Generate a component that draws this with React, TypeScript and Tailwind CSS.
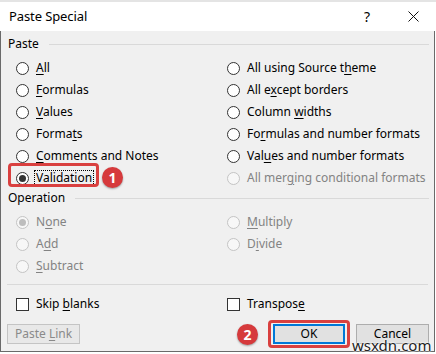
import React from "react";

type Lbl = { pre: string; u: string; post: string };

function Radio({ checked, disabled }: { checked?: boolean; disabled?: boolean }) {
  return (
    <span
      className={
        disabled
          ? "w-[13px] h-[13px] rounded-full border border-[#c4c4c4] bg-[#f7f7f7] flex items-center justify-center shrink-0"
          : "w-[13px] h-[13px] rounded-full border border-[#333333] bg-white flex items-center justify-center shrink-0"
      }
    >
      {checked ? (
        <span
          className={
            disabled
              ? "w-[7px] h-[7px] rounded-full bg-[#bdbdbd]"
              : "w-[7px] h-[7px] rounded-full bg-[#333333]"
          }
        />
      ) : null}
    </span>
  );
}

function Text({ l, disabled }: { l: Lbl; disabled?: boolean }) {
  return (
    <span className={disabled ? "text-[#838383] whitespace-nowrap" : "text-black whitespace-nowrap"}>
      {l.pre}
      <span className="underline underline-offset-[2px] decoration-1">{l.u}</span>
      {l.post}
    </span>
  );
}

function Opt({ l, checked, disabled }: { l: Lbl; checked?: boolean; disabled?: boolean }) {
  return (
    <div className="flex items-center h-[22px] gap-[7px]">
      <Radio checked={checked} disabled={disabled} />
      <Text l={l} disabled={disabled} />
    </div>
  );
}

function Check({ l }: { l: Lbl }) {
  return (
    <div className="flex items-center h-[22px] gap-[7px]">
      <span className="w-[13px] h-[13px] border border-[#333333] bg-white shrink-0" />
      <Text l={l} />
    </div>
  );
}

function Badge({ n }: { n: string }) {
  return (
    <span className="w-[21px] h-[21px] rounded-full bg-[#d63a3c] text-white text-[14px] font-bold flex items-center justify-center shadow-[0_1px_2px_rgba(0,0,0,0.35)] leading-none">
      {n}
    </span>
  );
}

function Header({ title }: { title: string }) {
  return (
    <div className="flex items-center h-[16px] pl-[7px] pr-[5px] gap-[10px]">
      <span className="text-black">{title}</span>
      <span className="flex-1 h-px bg-[#d9d9d9]" />
    </div>
  );
}

const L = (pre: string, u: string, post: string): Lbl => ({ pre, u, post });

export default function App() {
  return (
    <div className="w-[436px] h-[354px] bg-white relative overflow-hidden font-['Segoe_UI','Noto_Sans',sans-serif] text-[12px]">
      <div className="h-[2px] bg-[#e4e4e4]" />
      <div className="h-[29px] flex items-center bg-white">
        <span className="pl-[9px] text-[13px] tracking-[-0.1px] text-black">Paste Special</span>
        <div className="ml-auto flex items-center">
          <span className="w-[46px] flex justify-center text-[14px] text-black">?</span>
          <span className="w-[46px] flex justify-center">
            <svg width="11" height="11" viewBox="0 0 11 11">
              <path d="M0.5 0.5 L10.5 10.5 M10.5 0.5 L0.5 10.5" stroke="#111" strokeWidth="1" />
            </svg>
          </span>
        </div>
      </div>
      <div className="w-[435px] h-[321px] border-l border-r border-b border-[#6a6a6a] bg-[#f0f0f0] flex flex-col pt-[5px]">
        <Header title="Paste" />
        <div className="mt-[5px] grid grid-cols-[211px_1fr] pl-[15px]">
          <Opt l={L("", "A", "ll")} />
          <Opt l={L("All using Source t", "h", "eme")} />
          <Opt l={L("", "F", "ormulas")} />
          <Opt l={L("All e", "x", "cept borders")} />
          <Opt l={L("", "V", "alues")} />
          <Opt l={L("Column ", "w", "idths")} />
          <Opt l={L("Forma", "t", "s")} />
          <Opt l={L("Fo", "r", "mulas and number formats")} />
          <Opt l={L("", "C", "omments and Notes")} />
          <Opt l={L("Val", "u", "es and number formats")} />
          <div className="relative flex items-center h-[22px] gap-[7px]">
            <span className="absolute left-[-8px] top-[-4px] w-[91px] h-[24px] border-[3px] border-[#d9403f] rounded-[4px]" />
            <Radio checked />
            <span className="-ml-[2px] px-[1px] h-[16px] flex items-center border border-dotted border-black text-black whitespace-nowrap">
              Validatio<span className="underline underline-offset-[2px] decoration-1">n</span>
            </span>
            <span className="absolute left-[86px] top-[0px]">
              <Badge n="1" />
            </span>
          </div>
          <Opt l={L("All mer", "g", "ing conditional formats")} disabled />
        </div>
        <div className="mt-[1px]">
          <Header title="Operation" />
        </div>
        <div className="mt-[5px] grid grid-cols-[211px_1fr] pl-[15px]">
          <Opt l={L("N", "o", "ne")} checked disabled />
          <Opt l={L("", "M", "ultiply")} disabled />
          <Opt l={L("A", "d", "d")} disabled />
          <Opt l={L("D", "i", "vide")} disabled />
          <Opt l={L("", "S", "ubtract")} disabled />
          <div />
        </div>
        <div className="mt-[7px] mx-[6px] h-px bg-[#d9d9d9]" />
        <div className="mt-[8px] grid grid-cols-[211px_1fr] pl-[15px]">
          <Check l={L("Skip ", "b", "lanks")} />
          <Check l={L("Transpos", "e", "")} />
        </div>
        <div className="mt-[9px] flex items-center pl-[6px] pr-[5px]">
          <button className="w-[73px] h-[20px] border border-[#c4c4c4] bg-[#e8e8e8] text-[#8a8a8a] flex items-center justify-center">
            <span>
              Paste <span className="underline underline-offset-[2px] decoration-1">L</span>ink
            </span>
          </button>
          <div className="ml-auto relative">
            <span className="absolute left-[-36px] top-[0px]">
              <Badge n="2" />
            </span>
            <span className="absolute left-[-5px] right-[-5px] top-[-4px] bottom-[-4px] border-[3px] border-[#d9403f] rounded-[4px]" />
            <button className="w-[72px] h-[20px] border-2 border-[#0078d7] bg-[#e1e1e1] text-black flex items-center justify-center">
              OK
            </button>
          </div>
          <button className="ml-[11px] w-[73px] h-[20px] border border-[#adadad] bg-[#e1e1e1] text-black flex items-center justify-center">
            Cancel
          </button>
        </div>
      </div>
      <span className="absolute left-[352px] top-[337px] text-[15px] leading-[16px] text-[#222] [text-shadow:0_0_2px_#fff,0_0_2px_#fff,0_0_1px_#fff]">
        wsxdn.com
      </span>
    </div>
  );
}
